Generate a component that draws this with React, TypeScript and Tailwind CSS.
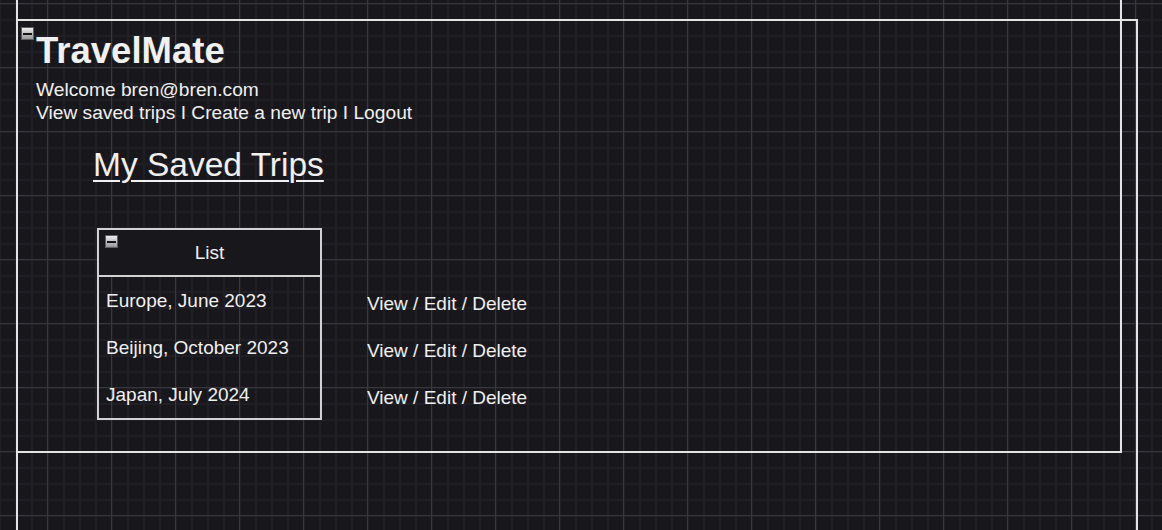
import React from "react";

const TRIPS = ["Europe, June 2023", "Beijing, October 2023", "Japan, July 2024"];

function CollapseIcon({ className }: { className: string }) {
  return (
    <div
      className={`${className} w-[13px] h-[13px] border border-[#5e5e5e] bg-gradient-to-b from-[#eeeeee] to-[#989898] flex items-center justify-center`}
    >
      <div className="w-[9px] h-[2px] bg-[#151515]" />
    </div>
  );
}

export default function App() {
  return (
    <div
      className="relative h-[530px] w-[1162px] overflow-hidden bg-[#18171c] text-[#f0f0f0] font-['Liberation_Sans',Arial,sans-serif]
        bg-[image:linear-gradient(to_right,#39383e_1px,transparent_1px),linear-gradient(to_bottom,#39383e_1px,transparent_1px),linear-gradient(to_right,#201f25_2px,transparent_2px),linear-gradient(to_bottom,#201f25_2px,transparent_2px)]
        bg-[size:64px_64px,64px_64px,16px_16px,16px_16px]
        bg-[position:47px_3px,47px_3px,47px_3px,47px_3px]"
    >
      {/* frames */}
      <div className="absolute left-[16px] top-[19px] w-[1122px] h-[600px] border-2 border-[#e4e4e4]" />
      <div className="absolute left-[16px] -top-[10px] w-[1106px] h-[463px] border-2 border-[#e4e4e4]" />
      <CollapseIcon className="absolute left-[21px] top-[27px] z-10" />

      <div className="relative pl-[36px] pt-[33px]">
        <h1 className="text-[36.5px] leading-[36px] font-bold">TravelMate</h1>
        <div className="mt-[9px] text-[19.2px] leading-[23px]">
          <div>Welcome bren@bren.com</div>
          <div>View saved trips I Create a new trip I Logout</div>
        </div>

        <h2 className="ml-[57px] mt-[24px] text-[33.5px] leading-[33px] underline decoration-2 underline-offset-[4px]">
          My Saved Trips
        </h2>

        <div className="ml-[61px] mt-[47px] flex text-[19px] leading-[23px]">
          <div className="w-[225px] border-2 border-[#d2d2d2]">
            <div className="relative h-[47px] border-b-2 border-[#d2d2d2] bg-[#18171c] flex items-center justify-center">
              <CollapseIcon className="absolute left-[6px] top-[5px]" />
              <span>List</span>
            </div>
            {TRIPS.map((t) => (
              <div key={t} className="h-[47px] px-[7px] flex items-center">
                {t}
              </div>
            ))}
          </div>
          <div className="ml-[45px] pt-[49px]">
            {TRIPS.map((t) => (
              <div key={t} className="h-[47px] pt-[5px] flex items-center">
                View / Edit / Delete
              </div>
            ))}
          </div>
        </div>
      </div>
    </div>
  );
}
